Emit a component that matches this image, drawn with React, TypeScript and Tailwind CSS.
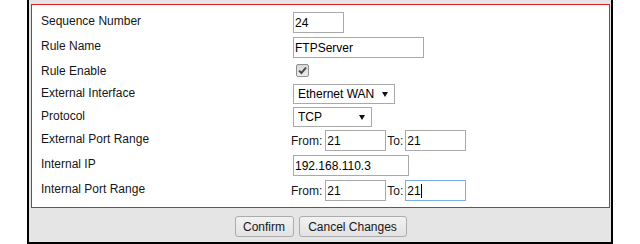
import React from 'react';

const field =
  'h-[21px] border border-[#a9a9a9] bg-white pl-[1px] text-[12px] text-black outline-none';
const label = 'w-[250px] shrink-0 pt-[2px] leading-[14px]';

function Arrow() {
  return (
    <svg
      width="6"
      height="5"
      viewBox="0 0 6 5"
      className="pointer-events-none absolute right-[7px] top-[8px]"
    >
      <polygon points="0,0 6,0 3,5" fill="#111" />
    </svg>
  );
}

function Select({ width, value, options }: { width: string; value: string; options: string[] }) {
  return (
    <div className={`relative ml-[2px] h-[20px] ${width}`}>
      <select
        defaultValue={value}
        className="h-full w-full appearance-none border border-[#a9a9a9] bg-white pl-[4px] text-[12px] text-black outline-none"
      >
        {options.map((o) => (
          <option key={o}>{o}</option>
        ))}
      </select>
      <Arrow />
    </div>
  );
}

function PortRange({ from, to, focused }: { from: string; to: string; focused?: boolean }) {
  return (
    <div className="flex items-center">
      <span>From:</span>
      <input className={`${field} ml-[3px] w-[61px]`} defaultValue={from} />
      <span className="ml-[1px]">To:</span>
      {focused ? (
        <div className="relative ml-[2px]">
          <input
            className="h-[21px] w-[61px] border border-[#7aaee4] bg-white pl-[1px] text-[12px] text-black outline-none"
            defaultValue={to}
          />
          {/* caret */}
          <span className="pointer-events-none absolute left-[16px] top-[4px] h-[14px] w-px bg-black" />
        </div>
      ) : (
        <input className={`${field} ml-[2px] w-[61px]`} defaultValue={to} />
      )}
    </div>
  );
}

export default function App() {
  return (
    <div className="h-[244px] w-[640px] bg-white pl-[27px] font-['Liberation_Sans',Arial,sans-serif] text-[12px] text-[#161616]">
      <div className="w-[586px] border-b-2 border-l-2 border-r-2 border-black bg-[#e5e5e5] pl-[2px] pr-px pt-[4px]">
        {/* form panel */}
        <div className="h-[204px] border border-[#ec1c24] bg-white pb-[6px] pl-[9px] pt-[7px]">
          <div className="flex h-[25px] items-start">
            <div className={label}>Sequence Number</div>
            <input className={`${field} ml-[2px] w-[51px]`} defaultValue="24" />
          </div>
          <div className="flex h-[25px] items-start">
            <div className={label}>Rule Name</div>
            <input className={`${field} ml-[2px] w-[131px]`} defaultValue="FTPServer" />
          </div>
          <div className="flex h-[22px] items-start">
            <div className={label}>Rule Enable</div>
            <span
              role="checkbox"
              aria-checked="true"
              className="ml-[5px] mt-[2px] flex h-[13px] w-[13px] items-center justify-center rounded-[2px] border border-[#8f8f8f] bg-gradient-to-b from-[#d8d8d8] to-[#eeeeee]"
            >
              <svg width="9" height="9" viewBox="0 0 9 9">
                <path d="M1 4.6 L3.4 7 L8 1.6" fill="none" stroke="#4a4a4a" strokeWidth="2" />
              </svg>
            </span>
          </div>
          <div className="flex h-[23px] items-start">
            <div className={label}>External Interface</div>
            <Select width="w-[102px]" value="Ethernet WAN" options={['Ethernet WAN']} />
          </div>
          <div className="flex h-[23px] items-start">
            <div className={label}>Protocol</div>
            <Select width="w-[79px]" value="TCP" options={['TCP', 'UDP', 'TCP/UDP']} />
          </div>
          <div className="flex h-[25px] items-start">
            <div className={label}>External Port Range</div>
            <PortRange from="21" to="21" />
          </div>
          <div className="flex h-[25px] items-start">
            <div className={label}>Internal IP</div>
            <input className={`${field} ml-[2px] w-[116px]`} defaultValue="192.168.110.3" />
          </div>
          <div className="flex h-[21px] items-start">
            <div className={label}>Internal Port Range</div>
            <PortRange from="21" to="21" focused />
          </div>
        </div>

        {/* actions */}
        <div className="flex justify-center gap-[5px] pb-[5px] pt-[8px]">
          <button className="h-[21px] w-[59px] rounded-[3px] border border-[#acacac] bg-gradient-to-b from-[#f2f2f2] to-[#e2e2e2] text-[12px] text-[#161616]">
            Confirm
          </button>
          <button className="h-[21px] w-[108px] rounded-[3px] border border-[#acacac] bg-gradient-to-b from-[#f2f2f2] to-[#e2e2e2] text-[12px] text-[#161616]">
            Cancel Changes
          </button>
        </div>
      </div>
    </div>
  );
}
